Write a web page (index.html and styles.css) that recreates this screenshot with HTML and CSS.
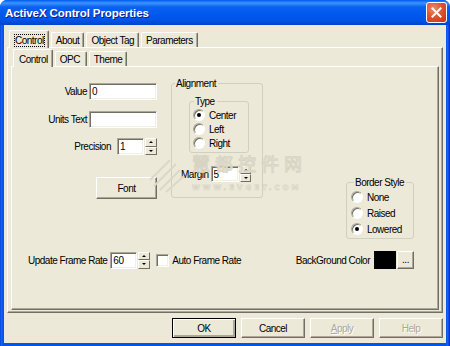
FILE: index.html
```html
<!DOCTYPE html>
<html lang="en">
<head>
    <meta charset="UTF-8">
    <title>ActiveX Control Properties</title>
    <link rel="stylesheet" href="styles.css">
</head>
<body>
<div class="window">
    <div class="titlebar">
        <span class="title">ActiveX Control Properties</span>
        <button class="close" type="button" aria-label="Close">
            <svg width="11" height="11" viewBox="0 0 11 11"><path d="M1.5 1.5 L9.5 9.5 M9.5 1.5 L1.5 9.5" stroke="#fff" stroke-width="2" stroke-linecap="square"/></svg>
        </button>
    </div>
    <div class="client">
        <div class="tabs outer-tabs">
            <div class="tab selected"><span class="focus">Control</span></div>
            <div class="tab">About</div>
            <div class="tab">Object Tag</div>
            <div class="tab">Parameters</div>
        </div>
        <div class="panel outer-panel">
            <div class="tabs inner-tabs">
                <div class="tab selected">Control</div>
                <div class="tab">OPC</div>
                <div class="tab">Theme</div>
            </div>
            <div class="panel inner-panel">
                <div class="top">
                    <div class="fields">
                        <div class="field value-row">
                            <label>Value</label>
                            <input class="edit wide" type="text" value="0">
                        </div>
                        <div class="field units-row">
                            <label>Units Text</label>
                            <input class="edit wide" type="text" value="">
                        </div>
                        <div class="field precision-row">
                            <label>Precision</label>
                            <input class="edit narrow" type="text" value="1">
                            <div class="spin"><span class="spin-btn up"></span><span class="spin-btn down"></span></div>
                        </div>
                        <button class="btn font-btn" type="button">Font</button>
                    </div>

                    <fieldset class="group align-group">
                        <legend>Alignment</legend>
                        <fieldset class="group type-group">
                            <legend>Type</legend>
                            <div class="radio"><span class="dot checked"></span>Center</div>
                            <div class="radio"><span class="dot"></span>Left</div>
                            <div class="radio"><span class="dot"></span>Right</div>
                        </fieldset>
                        <div class="field margin-row">
                            <label>Margin</label>
                            <input class="edit narrow" type="text" value="5">
                            <div class="spin small"><span class="spin-btn up"></span><span class="spin-btn down"></span></div>
                        </div>
                    </fieldset>

                    <fieldset class="group border-group">
                        <legend>Border Style</legend>
                        <div class="radio"><span class="dot"></span>None</div>
                        <div class="radio"><span class="dot"></span>Raised</div>
                        <div class="radio"><span class="dot checked"></span>Lowered</div>
                    </fieldset>
                </div>

                <div class="bottom-row">
                    <div class="field">
                        <label>Update Frame Rate</label>
                        <input class="edit narrow" type="text" value="60">
                        <div class="spin"><span class="spin-btn up"></span><span class="spin-btn down"></span></div>
                    </div>
                    <div class="check"><span class="box"></span>Auto Frame Rate</div>
                    <div class="color-pick">
                        <span>BackGround Color</span>
                        <span class="swatch"></span>
                        <button class="btn dots" type="button">...</button>
                    </div>
                </div>

                <!-- site watermark on the screenshot -->
                <div class="watermark">
                    <svg class="wm-logo" width="40" height="44" viewBox="0 0 40 44">
                        <path d="M2 30 L22 10 M6 36 L28 14 M12 40 L32 20 M18 42 L36 26" stroke="#dcd8c8" stroke-width="2" fill="none"/>
                    </svg>
                    <div class="wm-text">
                        <div class="wm-cn">慧都控件网</div>
                        <div class="wm-en">WWW.EVGET.COM</div>
                    </div>
                </div>
            </div>
        </div>
        <div class="buttons">
            <button class="btn default" type="button">OK</button>
            <button class="btn" type="button">Cancel</button>
            <button class="btn" type="button" disabled><u>A</u>pply</button>
            <button class="btn" type="button" disabled>Help</button>
        </div>
    </div>
</div>
</body>
</html>
```
FILE: styles.css
```css
* {
    box-sizing: border-box;
}

body {
    margin: 0;
    font-family: "Liberation Sans", Arial, sans-serif;
    font-size: 10px;
    letter-spacing: -0.5px;
    color: #000;
    background: #fff;
}

.window {
    width: 450px;
    height: 346px;
    display: flex;
    flex-direction: column;
    padding: 0 4px 3px;
    background: linear-gradient(to right, #0831d9 0, #166aee 1px, #0055ea 3px, #0055ea 446px, #166aee 448px, #0831d9 449px);
    border-radius: 7px 7px 0 0;
}

.titlebar {
    height: 25px;
    margin: 0 -4px;
    padding: 0 4px 0 5px;
    display: flex;
    align-items: center;
    justify-content: space-between;
    border-radius: 7px 7px 0 0;
    background: linear-gradient(to bottom, #0058ee 0, #3d95ff 3px, #0a62f0 7px, #0058ee 14px, #0054e8 20px, #0044cc 25px);
}

.title {
    color: #fff;
    font-weight: bold;
    font-size: 11.5px;
    letter-spacing: -0.1px;
    text-shadow: 1px 1px 0 #0f1d8c;
}

.close {
    width: 21px;
    height: 21px;
    margin-right: -1px;
    padding: 0;
    display: flex;
    align-items: center;
    justify-content: center;
    border: 1px solid #fff;
    border-radius: 3px;
    background: radial-gradient(circle at 35% 30%, #f08a6c 0, #e0542f 45%, #c2350f 100%);
}

.client {
    flex: 1;
    padding: 5px 3px 0;
    background: #ece9d8;
}

/* tabs */
.tabs {
    display: flex;
    align-items: flex-end;
    position: relative;
    z-index: 1;
    margin-left: 4px;
}

.tab {
    padding: 1px 4px 0;
    line-height: 13px;
    background: #ece9d8;
    border-top: 1px solid #fff;
    border-left: 1px solid #fff;
    border-right: 1px solid #716f64;
    border-radius: 2px 2px 0 0;
    box-shadow: inset -1px 0 #aca899;
    white-space: nowrap;
}

.tab + .tab {
    margin-left: 2px;
}

.tab.selected {
    padding: 3px 4px 1px 5px;
    margin: 0 0 -1px -2px;
}

.inner-tabs .tab {
    min-width: 32px;
}

.focus {
    outline: 1px dotted #000;
    outline-offset: 0;
}

.panel {
    border: 1px solid;
    border-color: #fff #716f64 #716f64 #fff;
    box-shadow: inset -1px -1px #aca899;
    background: #ece9d8;
}

.outer-panel {
    height: 266px;
    padding: 1px 3px 0;
}

.inner-panel {
    height: 244px;
    position: relative;
}

/* top area of the Control page */
.top {
    display: flex;
    align-items: flex-start;
    height: 184px;
}

.fields {
    width: 145px;
    padding-top: 16px;
    display: flex;
    flex-direction: column;
    align-items: flex-end;
}

.field {
    display: flex;
    align-items: center;
}

.field label {
    margin-right: 2px;
}

.units-row {
    margin-top: 11px;
}

.precision-row {
    margin-top: 10px;
}

.precision-row label {
    margin-right: 6px;
}

.edit {
    height: 17px;
    padding: 0 2px;
    font: inherit;
    letter-spacing: inherit;
    color: #000;
    background: #fff;
    border: 1px solid;
    border-color: #aca899 #fff #fff #aca899;
    box-shadow: inset 1px 1px #716f64, inset -1px -1px #f1efe2;
    outline: none;
}

.edit.wide {
    width: 68px;
}

.edit.narrow {
    width: 27px;
}

.spin {
    width: 12px;
    height: 17px;
    margin-left: 1px;
    display: flex;
    flex-direction: column;
}

.spin-btn {
    flex: 1;
    position: relative;
    background: #ece9d8;
    border: 1px solid;
    border-color: #fff #716f64 #716f64 #fff;
}

.spin-btn::after {
    content: "";
    position: absolute;
    left: 3px;
    top: 2px;
    border-left: 2px solid transparent;
    border-right: 2px solid transparent;
}

.spin-btn.up::after {
    border-bottom: 2px solid #000;
}

.spin-btn.down::after {
    border-top: 2px solid #000;
}

.spin.small {
    height: 16px;
    width: 11px;
}

.btn {
    height: 20px;
    width: 64px;
    padding: 0;
    font: inherit;
    letter-spacing: inherit;
    color: #000;
    background: #ece9d8;
    border: 1px solid;
    border-color: #fff #716f64 #716f64 #fff;
    box-shadow: inset -1px -1px #aca899;
}

.btn u {
    text-decoration: underline;
}

.btn:disabled {
    color: #aca899;
    text-shadow: 1px 1px 0 #fff;
}

.btn.default {
    border-color: #000;
    box-shadow: inset 1px 1px #fff, inset -2px -2px #aca899, inset -1px -1px #716f64;
}

.font-btn {
    width: 61px;
    height: 22px;
    margin-top: 22px;
}

/* group boxes */
.group {
    margin: 0;
    padding: 0;
    min-inline-size: 0;
    border: 1px solid #d0d0bf;
    border-radius: 3px;
}

.group legend {
    margin-left: 3px;
    padding: 0 2px 0 1px;
    line-height: 13px;
    white-space: nowrap;
}

.align-group {
    width: 92px;
    height: 121px;
    margin: 10px 0 0 14px;
}

.type-group {
    width: 60px;
    height: 58px;
    margin: 5px 0 0 17px;
    padding-left: 3px;
}

.type-group legend {
    margin-left: 1px;
}

.type-group .radio {
    height: 14px;
}

.margin-row {
    margin: 13px 0 0 9px;
}

.margin-row .edit {
    height: 16px;
    width: 28px;
}

.border-group {
    width: 68px;
    height: 63px;
    margin: 109px 24px 0 auto;
    padding-left: 4px;
}

.border-group .radio {
    height: 16px;
}

.radio {
    display: flex;
    align-items: center;
}

.dot {
    width: 12px;
    height: 12px;
    margin-right: 4px;
    position: relative;
    border-radius: 50%;
    background: #fff;
    border: 1px solid;
    border-color: #aca899 #fff #fff #aca899;
    box-shadow: inset 1px 1px #716f64;
}

.dot.checked::after {
    content: "";
    position: absolute;
    left: 3px;
    top: 3px;
    width: 4px;
    height: 4px;
    border-radius: 50%;
    background: #000;
}

/* bottom row */
.bottom-row {
    display: flex;
    align-items: center;
    height: 18px;
    padding: 0 24px 0 16px;
}

.bottom-row .field label {
    margin-right: 3px;
}

.check {
    display: flex;
    align-items: center;
    margin-left: 6px;
}

.box {
    width: 13px;
    height: 13px;
    margin-right: 3px;
    background: #fff;
    border: 1px solid;
    border-color: #aca899 #fff #fff #aca899;
    box-shadow: inset 1px 1px #716f64, inset -1px -1px #f1efe2;
}

.color-pick {
    margin-left: auto;
    display: flex;
    align-items: center;
}

.swatch {
    width: 22px;
    height: 18px;
    margin-left: 4px;
    background: #000;
}

.dots {
    width: 17px;
    height: 18px;
    margin-left: 1px;
    line-height: 12px;
}

/* buttons under the tabs */
.buttons {
    display: flex;
    justify-content: flex-end;
    gap: 5px;
    margin-top: 5px;
}

.watermark {
    position: absolute;
    left: 136px;
    top: 83px;
    display: flex;
    align-items: flex-start;
    pointer-events: none;
}

.wm-text {
    margin: 3px 0 0 4px;
}

.wm-cn {
    font-family: "Noto Sans CJK SC", sans-serif;
    font-size: 18px;
    line-height: 20px;
    letter-spacing: 5px;
    color: #f1efe6;
    -webkit-text-stroke: 1px #d8d4c4;
}

.wm-en {
    margin-top: 11px;
    font-family: "DejaVu Sans", sans-serif;
    font-size: 7px;
    line-height: 8px;
    font-weight: bold;
    letter-spacing: 3px;
    color: #f1efe6;
    -webkit-text-stroke: 0.6px #d5d1c1;
}
```
